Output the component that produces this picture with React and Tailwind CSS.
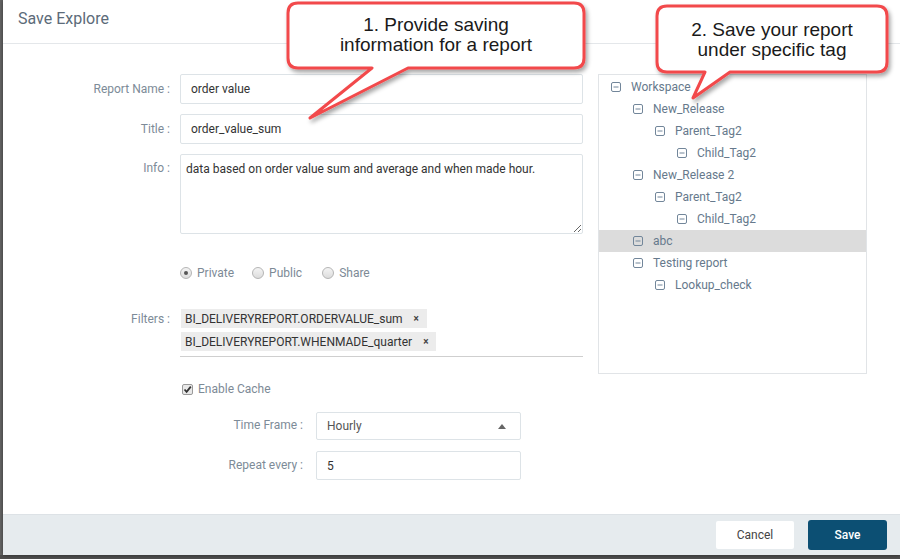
const treeItems = [
  { label: "Workspace", level: 0 },
  { label: "New_Release", level: 1 },
  { label: "Parent_Tag2", level: 2 },
  { label: "Child_Tag2", level: 3 },
  { label: "New_Release 2", level: 1 },
  { label: "Parent_Tag2", level: 2 },
  { label: "Child_Tag2", level: 3 },
  { label: "abc", level: 1, selected: true },
  { label: "Testing report", level: 1 },
  { label: "Lookup_check", level: 2 },
];

const indents = ["pl-[12px]", "pl-[34px]", "pl-[56px]", "pl-[78px]"];

function MinusBox() {
  return (
    <svg width="10" height="10" viewBox="0 0 10 10" className="shrink-0">
      <rect x="0.5" y="0.5" width="9" height="9" rx="1.5" fill="none" stroke="#72869a" strokeWidth="1" />
      <line x1="2.5" y1="5" x2="7.5" y2="5" stroke="#72869a" strokeWidth="1" />
    </svg>
  );
}

function Radio({ checked, label }) {
  return (
    <div className="flex items-center">
      <span className="w-[12px] h-[12px] rounded-full border border-[#b5b5b5] bg-gradient-to-b from-[#f4f4f4] to-[#dcdcdc] flex items-center justify-center">
        {checked && <span className="w-[4px] h-[4px] rounded-full bg-[#555]" />}
      </span>
      <span className="ml-[5px] text-[12px] text-[#7d8a96]">{label}</span>
    </div>
  );
}

function Chip({ text }) {
  return (
    <div className="flex items-center h-[19px] bg-[#ececec] pl-[4px] pr-[8px] text-[12px] text-[#333]">
      <span>{text}</span>
      <span className="ml-[11px] text-[10px] font-bold text-[#444]">×</span>
    </div>
  );
}

function Field({ label, children, labelPad = "pt-[6px]" }) {
  return (
    <div className="flex items-start">
      <div className={`w-[167px] text-right text-[12px] text-[#7d8b98] ${labelPad}`}>{label}</div>
      <div className="ml-[10px] w-[403px]">{children}</div>
    </div>
  );
}

export default function App() {
  return (
    <div
      className="w-[900px] h-[559px] bg-[#4e4e4e] relative overflow-hidden"
      style={{ fontFamily: "Roboto, 'Liberation Sans', sans-serif" }}
    >
      <div className="absolute left-0 top-0 w-[3px] h-[555px] bg-[#666]" />
      <div className="ml-[3px] w-[897px] h-[555px] bg-white flex flex-col shadow-[0_0_4px_rgba(0,0,0,0.5)] relative">
        {/* header */}
        <div className="h-[44px] shrink-0 border-b border-[#e4e7ea] pl-[15px] pt-[7px]">
          <div className="text-[16px] text-[#5c6b79]">Save Explore</div>
        </div>

        {/* body */}
        <div className="flex pt-[30px]">
          <div className="w-[580px] flex flex-col">
            <Field label="Report Name :">
              <input
                defaultValue="order value"
                className="w-full h-[30px] border border-[#dde3e7] rounded-[2px] px-[10px] text-[12px] text-[#333] outline-none"
              />
            </Field>
            <div className="mt-[10px]">
              <Field label="Title :">
                <input
                  defaultValue="order_value_sum"
                  className="w-full h-[30px] border border-[#dde3e7] rounded-[2px] px-[10px] text-[12px] text-[#333] outline-none"
                />
              </Field>
            </div>
            <div className="mt-[10px]">
              <Field label="Info :" labelPad="pt-[5px]">
                <textarea
                  defaultValue="data based on order value sum and average and when made hour."
                  className="block w-full h-[80px] border border-[#dde3e7] rounded-[2px] px-[5px] py-[5px] text-[12px] text-[#333] outline-none resize-y"
                />
              </Field>
            </div>

            <div className="ml-[177px] mt-[30px] flex items-center">
              <Radio checked label="Private" />
              <div className="ml-[18px]"><Radio label="Public" /></div>
              <div className="ml-[20px]"><Radio label="Share" /></div>
            </div>

            <div className="mt-[27px]">
              <Field label="Filters :" labelPad="pt-[1px]">
                <div className="border-b border-[#cfcfcf] pb-[5px] pl-[1px] flex flex-col items-start gap-[4px]">
                  <Chip text="BI_DELIVERYREPORT.ORDERVALUE_sum" />
                  <Chip text="BI_DELIVERYREPORT.WHENMADE_quarter" />
                </div>
              </Field>
            </div>

            <div className="ml-[179px] mt-[23px] flex items-center">
              <span className="w-[11px] h-[11px] rounded-[2px] border border-[#9a9a9a] bg-[#e8e8e8] flex items-center justify-center">
                <svg width="9" height="9" viewBox="0 0 9 9">
                  <path d="M1.5 4.5 L3.6 6.8 L7.8 1.6" fill="none" stroke="#333" strokeWidth="1.8" />
                </svg>
              </span>
              <span className="ml-[5px] text-[12px] text-[#7d8a96]">Enable Cache</span>
            </div>

            <div className="mt-[14px] flex items-center">
              <div className="w-[300px] text-right text-[12px] text-[#7d8b98] -mt-[2px]">Time Frame :</div>
              <div className="ml-[13px] w-[205px] h-[28px] border border-[#dde3e7] rounded-[2px] flex items-center justify-between pl-[10px] pr-[14px]">
                <span className="text-[12px] text-[#555]">Hourly</span>
                <svg width="8" height="5" viewBox="0 0 8 5">
                  <path d="M0 5 L4 0 L8 5 Z" fill="#666" />
                </svg>
              </div>
            </div>

            <div className="mt-[11px] flex items-center">
              <div className="w-[300px] text-right text-[12px] text-[#7d8b98] -mt-[2px]">Repeat every :</div>
              <input
                defaultValue="5"
                className="ml-[13px] w-[205px] h-[29px] border border-[#dde3e7] rounded-[2px] px-[10px] text-[12px] text-[#333] outline-none"
              />
            </div>
          </div>

          {/* tag tree */}
          <div className="ml-[15px] w-[269px] h-[300px] border border-[#e1e4e7] pt-[1px]">
            {treeItems.map((item, i) => (
              <div
                key={i}
                className={`h-[22px] flex items-center ${indents[item.level]} ${item.selected ? "bg-[#dcdcdc]" : ""}`}
              >
                <MinusBox />
                <span className="ml-[10px] text-[12px] text-[#66798c]">{item.label}</span>
              </div>
            ))}
          </div>
        </div>

        {/* footer */}
        <div className="mt-auto h-[41px] shrink-0 bg-[#e6ebee] border-t border-[#dde2e6] flex items-center justify-end pr-[13px]">
          <button className="w-[78px] h-[28px] bg-white rounded-[2px] text-[12px] text-[#444]">Cancel</button>
          <button className="ml-[14px] w-[79px] h-[30px] bg-[#0c4f73] rounded-[3px] text-[12px] font-medium text-white">Save</button>
        </div>
      </div>

      {/* callouts */}
      <svg className="absolute left-0 top-0 pointer-events-none" width="900" height="140" viewBox="0 0 900 140">
        <defs>
          <filter id="sh" x="-10%" y="-10%" width="130%" height="140%">
            <feDropShadow dx="2" dy="3" stdDeviation="2" floodColor="#000" floodOpacity="0.35" />
          </filter>
        </defs>
        <path
          d="M298 3 H574 Q584 3 584 13 V58 Q584 68 574 68 H408 L310 118 L372 68 H298 Q288 68 288 58 V13 Q288 3 298 3 Z"
          fill="#fff"
          stroke="#f2494b"
          strokeWidth="3"
          strokeLinejoin="round"
          filter="url(#sh)"
        />
        <path
          d="M667 6 H877 Q887 6 887 16 V62 Q887 72 877 72 H730 L693 98 L705 72 H667 Q657 72 657 62 V16 Q657 6 667 6 Z"
          fill="#fff"
          stroke="#f2494b"
          strokeWidth="3"
          strokeLinejoin="round"
          filter="url(#sh)"
        />
      </svg>
      <div
        className="absolute left-[288px] top-[15px] w-[296px] text-center text-[19px] leading-[20px] text-[#1a1a1a]"
        style={{ fontFamily: "'Liberation Sans', Arial, sans-serif" }}
      >
        1. Provide saving
        <br />
        information for a report
      </div>
      <div
        className="absolute left-[657px] top-[20px] w-[230px] text-center text-[19px] leading-[20px] text-[#1a1a1a]"
        style={{ fontFamily: "'Liberation Sans', Arial, sans-serif" }}
      >
        2. Save your report
        <br />
        under specific tag
      </div>
    </div>
  );
}
